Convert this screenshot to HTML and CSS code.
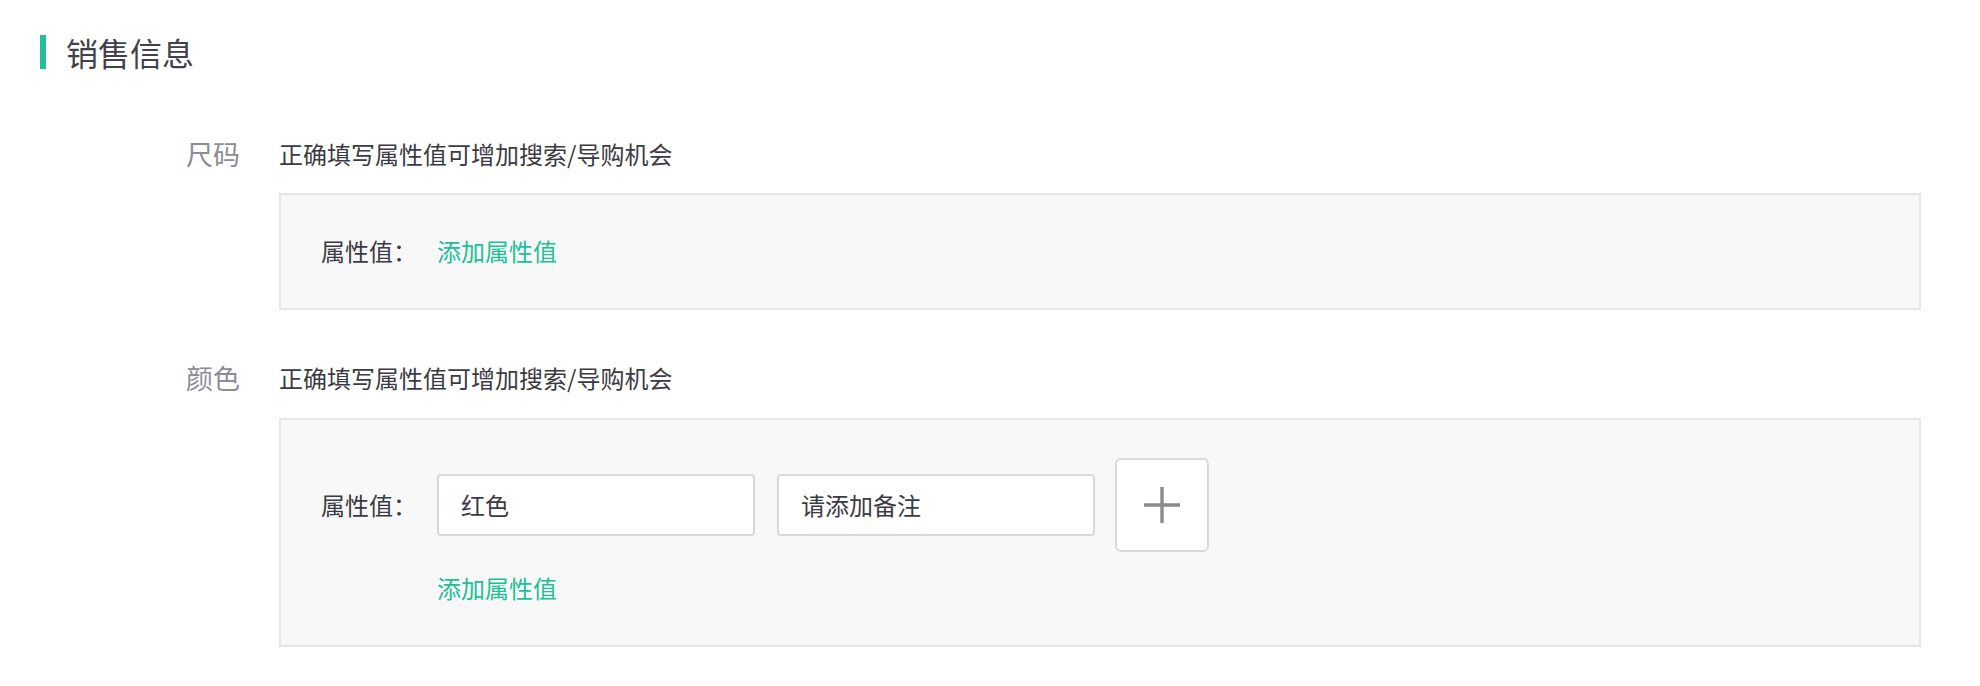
FILE: index.html
```html
<!DOCTYPE html>
<html lang="zh-CN">
<head>
<meta charset="utf-8">
<title>销售信息</title>
<link rel="stylesheet" href="styles.css">
</head>
<body>
<div class="page">
  <div class="section-head">
    <span class="section-bar"></span>
    <h2 class="section-title">销售信息</h2>
  </div>

  <div class="form">
    <div class="field">
      <div class="field-label">尺码</div>
      <div class="field-body">
        <div class="field-hint">正确填写属性值可增加搜索/导购机会</div>
        <div class="attr-box attr-box-empty">
          <div class="attr-row">
            <span class="attr-label">属性值：</span>
            <a class="attr-add">添加属性值</a>
          </div>
        </div>
      </div>
    </div>

    <div class="field field-second">
      <div class="field-label">颜色</div>
      <div class="field-body">
        <div class="field-hint">正确填写属性值可增加搜索/导购机会</div>
        <div class="attr-box">
          <div class="attr-row">
            <span class="attr-label">属性值：</span>
            <div class="attr-inputs">
              <div class="text-input">红色</div>
              <div class="text-input">请添加备注</div>
              <div class="plus-btn">
                <svg width="38" height="38" viewBox="0 0 38 38"><path d="M19 1V37M1 19H37" stroke="#8c8c8c" stroke-width="3.4" fill="none"/></svg>
              </div>
            </div>
          </div>
          <div class="attr-more">
            <a class="attr-add">添加属性值</a>
          </div>
        </div>
      </div>
    </div>
  </div>
</div>
</body>
</html>
```

FILE: styles.css
```css
* { box-sizing: border-box; }
html, body {
  margin: 0;
  padding: 0;
  background: #ffffff;
}
body {
  font-family: "Noto Sans CJK SC", "Noto Sans", sans-serif;
  color: #3b3b44;
}
.page {
  padding: 35px 59px 0 40px;
}
.section-head {
  display: flex;
  align-items: center;
  height: 34px;
}
.section-bar {
  width: 6px;
  height: 34px;
  background: #22bf98;
}
.section-title {
  margin: 0 0 0 20px;
  font-size: 32px;
  font-weight: normal;
  line-height: 34px;
  color: #41414b;
}
.form {
  margin-top: 67px;
  margin-left: -40px;
}
.field {
  display: flex;
  align-items: flex-start;
}
.field-second {
  margin-top: 50px;
}
.field-label {
  width: 240px;
  flex: none;
  text-align: right;
  font-size: 27px;
  line-height: 36px;
  color: #8c8c96;
}
.field-body {
  flex: 1;
  margin-left: 39px;
}
.field-hint {
  font-size: 24px;
  line-height: 36px;
  color: #3b3b44;
}
.attr-box {
  margin-top: 22px;
  background: #f8f8f8;
  border: 2px solid #e6e6e6;
  padding: 38px 40px 39px;
}
.attr-box-empty {
  padding: 38px 40px 39px;
  margin-top: 21px;
}
.attr-row {
  display: flex;
  align-items: center;
}
.attr-label {
  width: 116px;
  flex: none;
  font-size: 24px;
  line-height: 36px;
  color: #3b3b44;
}
.attr-add {
  font-size: 24px;
  line-height: 36px;
  color: #22bf98;
  cursor: pointer;
}
.attr-inputs {
  display: flex;
  align-items: center;
}
.text-input {
  width: 318px;
  height: 62px;
  background: #ffffff;
  border: 2px solid #d9d9d9;
  border-radius: 4px;
  padding-left: 22px;
  font-size: 24px;
  line-height: 58px;
  color: #3b3b44;
  margin-right: 22px;
}
.text-input + .text-input {
  margin-right: 20px;
}
.plus-btn {
  width: 94px;
  height: 94px;
  background: #ffffff;
  border: 2px solid #d9d9d9;
  border-radius: 6px;
  display: flex;
  align-items: center;
  justify-content: center;
}
.attr-more {
  margin-top: 18px;
  padding-left: 116px;
  display: flex;
}
```
